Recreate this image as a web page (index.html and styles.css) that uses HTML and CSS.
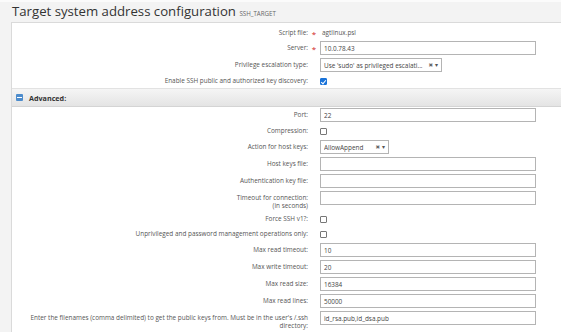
FILE: index.html
```html
<!DOCTYPE html>
<html lang="en">
<head>
    <meta charset="UTF-8">
    <meta name="viewport" content="width=device-width, initial-scale=1.0">
    <title>Target system address configuration</title>
    <link rel="stylesheet" href="styles.css">
</head>
<body>
    <h1 class="page-title">Target system address configuration <small>SSH_TARGET</small></h1>

    <div class="panel">
        <div class="form">
            <div class="row">
                <label class="row-label">Script file:</label>
                <span class="row-mark">*</span>
                <div class="row-field"><span class="static-value">agtlinux.psl</span></div>
            </div>
            <div class="row">
                <label class="row-label">Server:</label>
                <span class="row-mark">*</span>
                <div class="row-field"><input type="text" class="text-input" value="10.0.78.43"></div>
            </div>
            <div class="row">
                <label class="row-label">Privilege escalation type:</label>
                <span class="row-mark"></span>
                <div class="row-field">
                    <div class="combo combo-wide">
                        <span class="combo-value">Use 'sudo' as privileged escalati...</span>
                        <span class="combo-clear">&#10006;</span>
                        <span class="combo-arrow">&#9662;</span>
                    </div>
                </div>
            </div>
            <div class="row row-check">
                <label class="row-label">Enable SSH public and authorized key discovery:</label>
                <span class="row-mark"></span>
                <div class="row-field"><span class="check checked"></span></div>
            </div>
        </div>

        <div class="section-head">
            <span class="toggle-icon"></span>
            <span>Advanced:</span>
        </div>

        <div class="form form-advanced">
            <div class="row">
                <label class="row-label">Port:</label>
                <span class="row-mark"></span>
                <div class="row-field"><input type="text" class="text-input" value="22"></div>
            </div>
            <div class="row row-check">
                <label class="row-label">Compression:</label>
                <span class="row-mark"></span>
                <div class="row-field"><span class="check"></span></div>
            </div>
            <div class="row">
                <label class="row-label">Action for host keys:</label>
                <span class="row-mark"></span>
                <div class="row-field">
                    <div class="combo combo-small">
                        <span class="combo-value">AllowAppend</span>
                        <span class="combo-clear">&#10006;</span>
                        <span class="combo-arrow">&#9662;</span>
                    </div>
                </div>
            </div>
            <div class="row">
                <label class="row-label">Host keys file:</label>
                <span class="row-mark"></span>
                <div class="row-field"><input type="text" class="text-input" value=""></div>
            </div>
            <div class="row">
                <label class="row-label">Authentication key file:</label>
                <span class="row-mark"></span>
                <div class="row-field"><input type="text" class="text-input" value=""></div>
            </div>
            <div class="row">
                <label class="row-label">Timeout for connection:<br>(in seconds)</label>
                <span class="row-mark"></span>
                <div class="row-field"><input type="text" class="text-input" value=""></div>
            </div>
            <div class="row row-check">
                <label class="row-label">Force SSH v1?:</label>
                <span class="row-mark"></span>
                <div class="row-field"><span class="check"></span></div>
            </div>
            <div class="row row-check">
                <label class="row-label">Unprivileged and password management operations only:</label>
                <span class="row-mark"></span>
                <div class="row-field"><span class="check"></span></div>
            </div>
            <div class="row">
                <label class="row-label">Max read timeout:</label>
                <span class="row-mark"></span>
                <div class="row-field"><input type="text" class="text-input" value="10"></div>
            </div>
            <div class="row">
                <label class="row-label">Max write timeout:</label>
                <span class="row-mark"></span>
                <div class="row-field"><input type="text" class="text-input" value="20"></div>
            </div>
            <div class="row">
                <label class="row-label">Max read size:</label>
                <span class="row-mark"></span>
                <div class="row-field"><input type="text" class="text-input" value="16384"></div>
            </div>
            <div class="row">
                <label class="row-label">Max read lines:</label>
                <span class="row-mark"></span>
                <div class="row-field"><input type="text" class="text-input" value="50000"></div>
            </div>
            <div class="row">
                <label class="row-label">Enter the filenames (comma delimited) to get the public keys from. Must be in the user's /.ssh<br>directory:</label>
                <span class="row-mark"></span>
                <div class="row-field"><input type="text" class="text-input" value="id_rsa.pub,id_dsa.pub"></div>
            </div>
        </div>
    </div>
</body>
</html>
```

FILE: styles.css
```css
body {
    margin: 0;
    background-color: #f3f3f3;
    font-family: "Open Sans", "DejaVu Sans", sans-serif;
    color: #555;
    overflow: hidden;
    border-top: 2px solid #fbfbfb;
}

.page-title {
    margin: 0;
    padding-left: 12px;
    height: 20px;
    line-height: 19px;
    font-size: 13.2px;
    font-weight: normal;
    color: #333;
}

.page-title small {
    font-size: 6.2px;
    text-transform: uppercase;
    color: #666;
}

.panel {
    margin-left: 11px;
    background-color: #fff;
    border: 1px solid #dadada;
    border-right: none;
    min-height: 320px;
}

.form {
    display: flex;
    flex-direction: column;
    gap: 3px;
    padding: 3px 0 1px;
}

.form-advanced {
    padding-top: 1px;
}

.row {
    display: flex;
    align-items: flex-start;
}

.row-check {
    min-height: 12px;
    align-items: center;
}

.row-label {
    width: 296px;
    text-align: right;
    font-size: 6.4px;
    line-height: 8px;
    padding-top: 3px;
    white-space: nowrap;
}

.row-check .row-label {
    padding-top: 0;
}

.row-mark {
    width: 12px;
    text-align: center;
    color: #d02020;
    font-size: 8px;
    line-height: 8px;
    padding-top: 4px;
}

.row-field {
    width: 216px;
    display: flex;
    align-items: center;
}

.row-check .row-mark,
.row-check .row-field {
    padding-top: 0;
}

.static-value {
    font-size: 6.4px;
    line-height: 8px;
    padding-top: 3px;
    padding-left: 2px;
    color: #555;
}

.text-input {
    box-sizing: border-box;
    width: 216px;
    height: 14px;
    margin: 0;
    padding: 0 3px;
    border: 1px solid #b4b4b4;
    font-family: inherit;
    font-size: 6.4px;
    color: #444;
    background-color: #fff;
}

.combo {
    box-sizing: border-box;
    height: 14px;
    display: flex;
    align-items: center;
    padding: 0 3px;
    border: 1px solid #b4b4b4;
    font-size: 6.4px;
    color: #444;
}

.combo-wide {
    width: 122px;
}

.combo-small {
    width: 69px;
}

.combo-value {
    flex: 1;
    white-space: nowrap;
    overflow: hidden;
}

.combo-clear {
    font-size: 5.5px;
    color: #666;
    margin: 0 2px;
}

.combo-arrow {
    font-size: 6px;
    color: #555;
}

.check {
    box-sizing: border-box;
    width: 7px;
    height: 7px;
    border: 1px solid #777;
    border-radius: 1px;
    background-color: #fff;
}

.check.checked {
    position: relative;
    border-color: #1a73d9;
    background-color: #1a73d9;
}

.check.checked::after {
    content: "";
    position: absolute;
    left: 1px;
    top: 0;
    width: 2px;
    height: 4px;
    border: solid #fff;
    border-width: 0 1px 1px 0;
    transform: rotate(40deg);
}

.section-head {
    box-sizing: border-box;
    height: 19px;
    display: flex;
    align-items: center;
    gap: 6px;
    padding-left: 4px;
    background: linear-gradient(#f5f5f5, #e4e4e4);
    border-top: 1px solid #e2e2e2;
    border-bottom: 1px solid #d4d4d4;
    font-size: 7.2px;
    font-weight: bold;
    color: #333;
}

.toggle-icon {
    position: relative;
    width: 7px;
    height: 7px;
    border-radius: 1px;
    background-color: #4d8ccc;
}

.toggle-icon::after {
    content: "";
    position: absolute;
    left: 1px;
    right: 1px;
    top: 3px;
    height: 1px;
    background-color: #fff;
}
```
